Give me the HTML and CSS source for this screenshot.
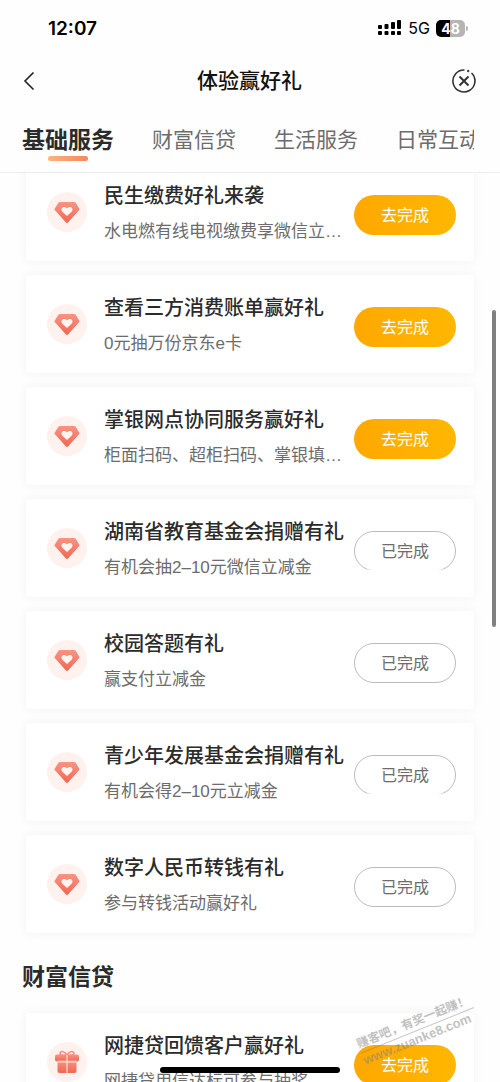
FILE: index.html
```html
<!DOCTYPE html>
<html lang="zh-CN">
<head>
<meta charset="utf-8">
<meta name="viewport" content="width=device-width, initial-scale=1">
<title>体验赢好礼</title>
<link rel="stylesheet" href="styles.css">
</head>
<body>
<svg class="defs" width="0" height="0" aria-hidden="true">
  <defs>
    <linearGradient id="coral" x1="0" y1="0" x2="0" y2="1">
      <stop offset="0" stop-color="#f89484"/>
      <stop offset="1" stop-color="#f2664f"/>
    </linearGradient>
    <symbol id="gem" viewBox="0 0 40 40">
      <circle cx="20" cy="20" r="20" fill="#fef1ee"/>
      <path d="M13 10h14q1 0 1.600.800l3.600 5.600q.700 1-.200 1.900L21 30.600q-1 .900-2 0L8 18.300q-.900-.900-.200-1.900l3.600-5.600q.600-.800 1.600-.800z" fill="url(#coral)"/>
      <path d="M20 24l-4.600-4.300c-2.700-2.800.9-6.800 4.600-3.400 3.700-3.400 7.300.6 4.600 3.400z" fill="#fff4f1"/>
    </symbol>
    <symbol id="gift" viewBox="0 0 40 40">
      <circle cx="20" cy="20" r="20" fill="#fef1ee"/>
      <path d="M20 13c-2-4-7-4.500-7-1.500 0 1.500 2 2 7 1.500zM20 13c2-4 7-4.500 7-1.500 0 1.500-2 2-7 1.500z" fill="#fef1ee" stroke="#f68876" stroke-width="1.500"/>
      <rect x="8" y="12.500" width="24" height="7" rx="2" fill="url(#coral)"/>
      <path d="M10.500 18h19v11q0 2-2 2h-15q-2 0-2-2z" fill="url(#coral)"/>
      <path d="M20 13v18M10.500 20h19" stroke="#fef1ee" stroke-width="1"/>
    </symbol>
  </defs>
</svg>
<div class="app">
  <header class="top">
    <div class="status">
      <span class="time">12:07</span>
      <div class="signals">
        <svg width="24" height="18" viewBox="0 0 24 18" aria-hidden="true">
          <g fill="#000">
            <rect x="0" y="6" width="4" height="4" rx="1"/><rect x="6.500" y="5" width="4" height="5" rx="1"/><rect x="13" y="3" width="4" height="7" rx="1"/><rect x="19" y="1" width="4" height="9" rx="1"/>
            <rect x="0" y="12" width="4" height="4" rx="1"/><rect x="6.500" y="12" width="4" height="4" rx="1"/><rect x="13" y="12" width="4" height="4" rx="1"/><rect x="19" y="12" width="4" height="4" rx="1"/>
          </g>
        </svg>
        <span class="network">5G</span>
        <span class="battery">48</span>
      </div>
    </div>
    <div class="titlebar">
      <button class="icon-button" type="button" aria-label="返回">
        <svg width="12" height="20" viewBox="0 0 12 20" fill="none" stroke="#222" stroke-width="1.600"><path d="M10.500 1.500L2 10l8.500 8.500"/></svg>
      </button>
      <h1>体验赢好礼</h1>
      <button class="icon-button" type="button" aria-label="关闭">
        <svg width="24" height="24" viewBox="0 0 24 24" fill="none" stroke="#333" stroke-width="1.600"><path d="M12.500 1A11 11 0 1 0 19.500 4"/><circle cx="16.200" cy="2" r=".800" fill="#333" stroke-width="1"/><path d="M7.500 7.500l9 9M16.500 7.500l-9 9" stroke-width="2"/></svg>
      </button>
    </div>
    <nav class="tabs">
      <a class="tab active" href="#basic">基础服务</a>
      <a class="tab" href="#wealth">财富信贷</a>
      <a class="tab" href="#life">生活服务</a>
      <a class="tab" href="#daily">日常互动</a>
    </nav>
  </header>
  <main>
    <section class="list scrolled" id="basic">
      <article class="card"><svg class="badge"><use href="#gem"/></svg><div class="info"><h3>民生缴费好礼来袭</h3><p>水电燃有线电视缴费享微信立减金</p></div><button class="action" type="button">去完成</button></article>
      <article class="card"><svg class="badge"><use href="#gem"/></svg><div class="info"><h3>查看三方消费账单赢好礼</h3><p>0元抽万份京东e卡</p></div><button class="action" type="button">去完成</button></article>
      <article class="card"><svg class="badge"><use href="#gem"/></svg><div class="info"><h3>掌银网点协同服务赢好礼</h3><p>柜面扫码、超柜扫码、掌银填单有好礼</p></div><button class="action" type="button">去完成</button></article>
      <article class="card"><svg class="badge"><use href="#gem"/></svg><div class="info"><h3>湖南省教育基金会捐赠有礼</h3><p>有机会抽2–10元微信立减金</p></div><button class="action done trimmed" type="button">已完成</button></article>
      <article class="card"><svg class="badge"><use href="#gem"/></svg><div class="info"><h3>校园答题有礼</h3><p>赢支付立减金</p></div><button class="action done" type="button">已完成</button></article>
      <article class="card"><svg class="badge"><use href="#gem"/></svg><div class="info"><h3>青少年发展基金会捐赠有礼</h3><p>有机会得2–10元立减金</p></div><button class="action done trimmed" type="button">已完成</button></article>
      <article class="card"><svg class="badge"><use href="#gem"/></svg><div class="info"><h3>数字人民币转钱有礼</h3><p>参与转钱活动赢好礼</p></div><button class="action done" type="button">已完成</button></article>
    </section>
    <h2>财富信贷</h2>
    <section class="list" id="wealth">
      <article class="card"><svg class="badge"><use href="#gift"/></svg><div class="info"><h3>网捷贷回馈客户赢好礼</h3><p>网捷贷用信达标可参与抽奖</p></div><button class="action" type="button">去完成</button></article>
    </section>
  </main>
  <div class="scrollbar"></div>
  <div class="home-bar"></div>
  <div class="watermark"><span class="slogan">赚客吧，有奖一起赚！</span><span class="site">www.zuanke8.com</span></div>
</div>
</body>
</html>
```
FILE: styles.css
```css
* { box-sizing: border-box; }

body {
  margin: 0;
  background: #fefefe;
  color: #2b2b2b;
  font-family: "Liberation Sans", "Noto Sans CJK SC", sans-serif;
}

h1, h2, h3, p { margin: 0; }
button { padding: 0; border: 0; background: none; font-family: inherit; }
.defs { position: absolute; }

.app {
  position: relative;
  height: 100vh;
  overflow: hidden;
}

.top {
  position: relative;
  z-index: 1;
  background: #fefefe;
  border-bottom: 1px solid #ececec;
}

.status {
  display: flex;
  align-items: center;
  justify-content: space-between;
  height: 56px;
  padding: 0 35px 0 48px;
  color: #000;
  font-family: Inter, sans-serif;
}
.time { font-size: 19px; font-weight: 600; }
.signals { display: flex; align-items: center; gap: 6px; }
.network { font-size: 16px; font-weight: 400; }
.battery {
  position: relative;
  width: 29px;
  height: 17px;
  border-radius: 5px;
  background: linear-gradient(90deg, #000 48%, #b5b5b5 48%);
  color: #fff;
  font-size: 14px;
  font-weight: 700;
  line-height: 17px;
  text-align: center;
}
.battery::after {
  content: "";
  position: absolute;
  top: 6px;
  right: -3px;
  width: 2px;
  height: 5px;
  border-radius: 0 2px 2px 0;
  background: #b5b5b5;
}

.titlebar {
  display: flex;
  align-items: center;
  justify-content: space-between;
  height: 50px;
  padding: 0 24px 0 23px;
}
.titlebar h1 { color: #111; font-size: 21px; font-weight: 500; line-height: 30px; }
.icon-button { display: flex; width: 24px; height: 24px; align-items: center; justify-content: center; }
.icon-button:first-child { justify-content: flex-start; }

.tabs {
  display: flex;
  gap: 38px;
  height: 66px;
  margin: 0 26px 0 22px;
  overflow: hidden;
}
.tab {
  position: relative;
  flex: none;
  color: #6c6c6c;
  font-size: 21px;
  font-weight: 400;
  line-height: 68px;
  text-decoration: none;
}
.tab.active { color: #2b2b2b; font-size: 23px; font-weight: 700; }
.tab.active::after {
  content: "";
  position: absolute;
  top: 50px;
  left: 26px;
  width: 40px;
  height: 5px;
  border-radius: 3px;
  background: linear-gradient(90deg, #fbb57c, #f7865d);
}

.list {
  display: flex;
  flex-direction: column;
  gap: 14px;
  padding: 0 26px;
}
.list.scrolled { margin-top: -10px; }

.card {
  display: flex;
  align-items: center;
  height: 98px;
  padding: 0 18px 0 21px;
  border-radius: 3px;
  background: #fff;
  box-shadow: 0 0 12px rgba(0, 0, 0, 0.05);
}
.badge { flex: none; width: 40px; height: 40px; }
.info { flex: 1; min-width: 0; margin-left: 17px; padding-top: 4px; }
.info h3 {
  font-size: 20px;
  font-weight: 500;
  line-height: 36px;
  white-space: nowrap;
}
.info p {
  overflow: hidden;
  color: #6c6c6c;
  font-size: 17px;
  font-weight: 400;
  line-height: 36px;
  text-overflow: ellipsis;
  white-space: nowrap;
}
.action {
  flex: none;
  width: 102px;
  height: 40px;
  margin: 5px 0 0 8px;
  padding-bottom: 2px;
  border-radius: 20px;
  background: linear-gradient(90deg, #ffa800, #ffb700);
  color: #fff;
  font-size: 16px;
}
.action.done { border: 1px solid #bbb; background: #fff; color: #6c6c6c; }
.action.trimmed { clip-path: inset(0 0 1px 0); }

h2 {
  height: 80px;
  padding-left: 22px;
  font-size: 23px;
  font-weight: 700;
  line-height: 88px;
}

.scrollbar {
  position: absolute;
  top: 310px;
  right: 4px;
  width: 4px;
  height: 317px;
  border-radius: 2px;
  background: #808080;
}
.home-bar {
  position: absolute;
  bottom: 9px;
  left: 50%;
  width: 180px;
  height: 6px;
  margin-left: -90px;
  border-radius: 3px;
  background: #000;
}
.watermark {
  position: absolute;
  right: 22px;
  bottom: 35px;
  display: flex;
  flex-direction: column;
  width: 122px;
  color: rgba(130, 130, 130, 0.5);
  font-weight: 700;
  white-space: nowrap;
  transform: rotate(-22deg);
}
.slogan { border-bottom: 1px solid rgba(120, 120, 120, 0.4); font-size: 12px; line-height: 18px; }
.site { font-size: 13px; line-height: 16px; }
```
